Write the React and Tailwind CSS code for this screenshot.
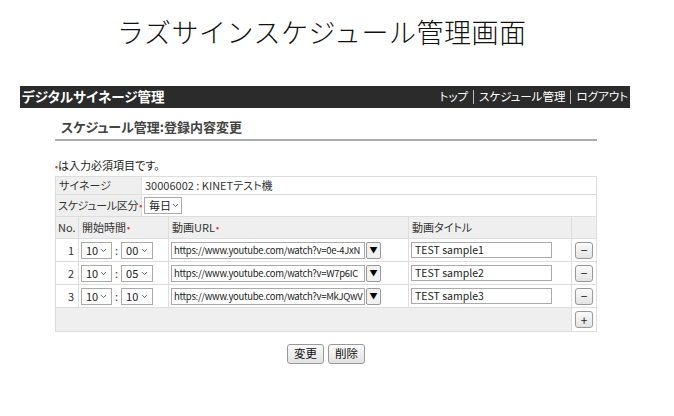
import { ChevronDown } from "lucide-react";

const jp = { fontFamily: '"Noto Sans CJK JP", "Noto Sans", sans-serif' };

const rows = [
  { no: 1, h: "10", m: "00", url: "https://www.youtube.com/watch?v=0e-4JxN", title: "TEST sample1" },
  { no: 2, h: "10", m: "05", url: "https://www.youtube.com/watch?v=W7p6IC", title: "TEST sample2" },
  { no: 3, h: "10", m: "10", url: "https://www.youtube.com/watch?v=MkJQwV", title: "TEST sample3" },
];

const Req = () => <span className="text-[#e33] text-[9px] ml-[1px]">•</span>;

const Select = ({ value, w }) => (
  <div className={`${w} shrink-0 h-[17px] flex items-center justify-between whitespace-nowrap border border-[#aaa] bg-white pl-[4px] pr-[3px] text-[11px] text-[#222]`}>
    <span>{value}</span>
    <ChevronDown size={9} strokeWidth={2.5} className="text-[#555] shrink-0" />
  </div>
);

const SmallBtn = ({ children }) => (
  <div className="w-[18px] h-[17px] flex items-center justify-center rounded-[3px] border border-[#999] bg-gradient-to-b from-[#fafafa] to-[#e4e4e4] text-[12px] leading-none text-[#222]">
    {children}
  </div>
);

const App = () => {
  return (
    <div className="w-[674px] h-[416px] bg-white text-[#333] [font-feature-settings:'palt']" style={jp}>
      <div className="pt-[14px] pl-[117px] h-[86px]">
        <h1 className="text-[27px] font-light leading-[36px] tracking-[0.5px] text-[#111] [font-feature-settings:normal]">
          ラズサインスケジュール管理画面
        </h1>
      </div>

      <div className="ml-[20px] w-[610px] h-[22px] bg-[#2b2b2b] flex items-center justify-between pl-[2px] pr-[2px]">
        <span className="text-white font-bold text-[13.5px] leading-none">デジタルサイネージ管理</span>
        <div className="flex items-center text-white text-[11.5px] leading-none whitespace-nowrap">
          <span className="pr-[5px]">トップ</span>
          <span className="w-px h-[14px] bg-[#bbb]" />
          <span className="px-[5px]">スケジュール管理</span>
          <span className="w-px h-[14px] bg-[#bbb]" />
          <span className="pl-[5px]">ログアウト</span>
        </div>
      </div>

      <div className="ml-[55px] w-[542px]">
        <div className="h-[33px] flex items-center pl-[6px] pt-[7px] border-b-2 border-[#aaa]">
          <span className="text-[13px] font-bold text-[#444]">スケジュール管理:登録内容変更</span>
        </div>

        <div className="mt-[17px] text-[11px] leading-[14px] text-[#222]">
          <span className="text-[#e33] text-[9px]">•</span>は入力必須項目です。
        </div>

        <div className="mt-[2px] border border-[#ddd] text-[11px] text-[#333] whitespace-nowrap">
          <div className="flex h-[18px] border-b border-[#ddd]">
            <div className="w-[86px] shrink-0 bg-[#efefef] border-r border-[#ddd] pl-[3px] flex items-center">サイネージ</div>
            <div className="flex-1 pl-[3px] flex items-center">30006002 : KINETテスト機</div>
          </div>
          <div className="flex h-[22px] border-b border-[#ddd]">
            <div className="w-[86px] shrink-0 bg-[#efefef] border-r border-[#ddd] pl-[2px] flex items-center tracking-[-0.3px]">
              スケジュール区分<Req />
            </div>
            <div className="flex-1 pl-[2px] flex items-center">
              <Select value="毎日" w="w-[38px]" />
            </div>
          </div>

          <div className="flex h-[22px] bg-[#efefef] border-b border-[#ddd]">
            <div className="w-[23px] shrink-0 border-r border-[#ddd] pl-[2px] flex items-center">No.</div>
            <div className="w-[90px] shrink-0 border-r border-[#ddd] pl-[3px] flex items-center">
              開始時間<Req />
            </div>
            <div className="w-[240px] shrink-0 border-r border-[#ddd] pl-[3px] flex items-center">
              動画URL<Req />
            </div>
            <div className="w-[163px] shrink-0 border-r border-[#ddd] pl-[3px] flex items-center">動画タイトル</div>
            <div className="flex-1" />
          </div>

          {rows.map((r) => (
            <div key={r.no} className="flex h-[23px] border-b border-[#ddd]">
              <div className="w-[23px] shrink-0 border-r border-[#ddd] pr-[4px] flex items-center justify-end">{r.no}</div>
              <div className="w-[90px] shrink-0 border-r border-[#ddd] pl-[2px] flex items-center gap-[3px]">
                <Select value={r.h} w="w-[31px]" />
                <span>:</span>
                <Select value={r.m} w="w-[32px]" />
              </div>
              <div className="w-[240px] shrink-0 border-r border-[#ddd] pl-[2px] flex items-center">
                <div className="w-[194px] shrink-0 h-[17px] border border-[#aaa] bg-white overflow-hidden pl-[2px] text-[9.5px] leading-[15px] tracking-[-0.3px] text-[#222]">
                  {r.url}
                </div>
                <div className="w-[15px] shrink-0 h-[17px] ml-[1px] border border-[#999] rounded-[2px] bg-[#f2f2f2] flex items-center justify-center text-[8px] text-black">
                  ▼
                </div>
              </div>
              <div className="w-[163px] shrink-0 border-r border-[#ddd] pl-[2px] flex items-center">
                <div className="w-[141px] h-[16px] border border-[#aaa] bg-white pl-[3px] text-[10.5px] leading-[14px] text-[#222]">
                  {r.title}
                </div>
              </div>
              <div className="flex-1 flex items-center justify-center">
                <SmallBtn>−</SmallBtn>
              </div>
            </div>
          ))}

          <div className="flex h-[23px] bg-[#efefef]">
            <div className="w-[516px] shrink-0 border-r border-[#ddd]" />
            <div className="flex-1 bg-white flex items-center justify-center">
              <SmallBtn>+</SmallBtn>
            </div>
          </div>
        </div>

        <div className="mt-[12px] flex justify-center gap-[4px]">
          <button className="h-[20px] px-[6px] rounded-[3px] border border-[#999] bg-gradient-to-b from-[#fafafa] to-[#e2e2e2] text-[11.5px] leading-none text-[#111]">
            変更
          </button>
          <button className="h-[20px] px-[6px] rounded-[3px] border border-[#999] bg-gradient-to-b from-[#fafafa] to-[#e2e2e2] text-[11.5px] leading-none text-[#111]">
            削除
          </button>
        </div>
      </div>
    </div>
  );
};

export default App;
